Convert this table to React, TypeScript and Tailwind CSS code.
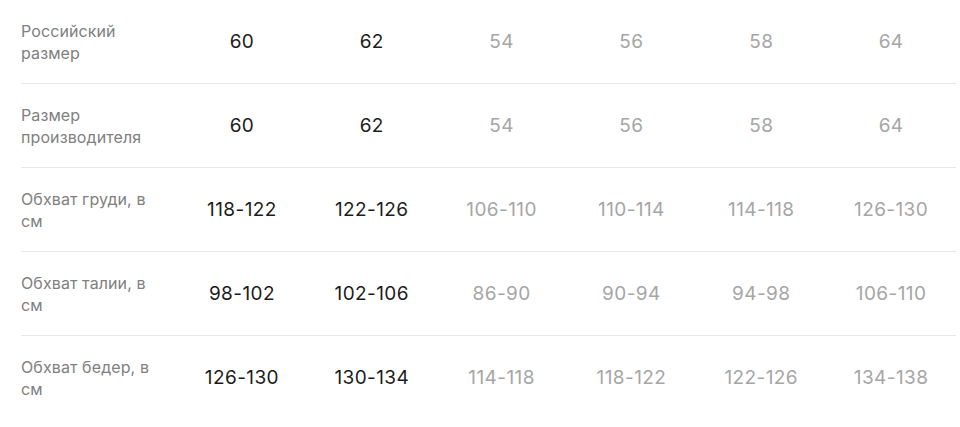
import React from "react";

const rows: { label: string; vals: string[] }[] = [
  { label: "Российский размер", vals: ["60", "62", "54", "56", "58", "64"] },
  { label: "Размер производителя", vals: ["60", "62", "54", "56", "58", "64"] },
  { label: "Обхват груди, в см", vals: ["118-122", "122-126", "106-110", "110-114", "114-118", "126-130"] },
  { label: "Обхват талии, в см", vals: ["98-102", "102-106", "86-90", "90-94", "94-98", "106-110"] },
  { label: "Обхват бедер, в см", vals: ["126-130", "130-134", "114-118", "118-122", "122-126", "134-138"] },
];

export default function App() {
  return (
    <div className="w-[960px] h-[427px] bg-white" style={{ fontFamily: "Inter, 'Noto Sans', sans-serif" }}>
      <div className="ml-[21px] w-[935px]">
        {rows.map((r, i) => (
          <div
            key={i}
            className={`grid grid-cols-[156px_repeat(6,1fr)] items-center h-[84px] ${i < rows.length - 1 ? "border-b border-[#e6e6e6]" : ""}`}
          >
            <div className="w-[140px] text-[16px] leading-[22px] text-[#808080] tracking-[0.1px]">{r.label}</div>
            {r.vals.map((v, j) => (
              <div
                key={j}
                className={`text-center text-[19px] leading-[24px] tracking-[0.4px] ${j < 2 ? "text-[#1c1c1c]" : "text-[#a6a6a6]"}`}
              >
                {v}
              </div>
            ))}
          </div>
        ))}
      </div>
    </div>
  );
}
